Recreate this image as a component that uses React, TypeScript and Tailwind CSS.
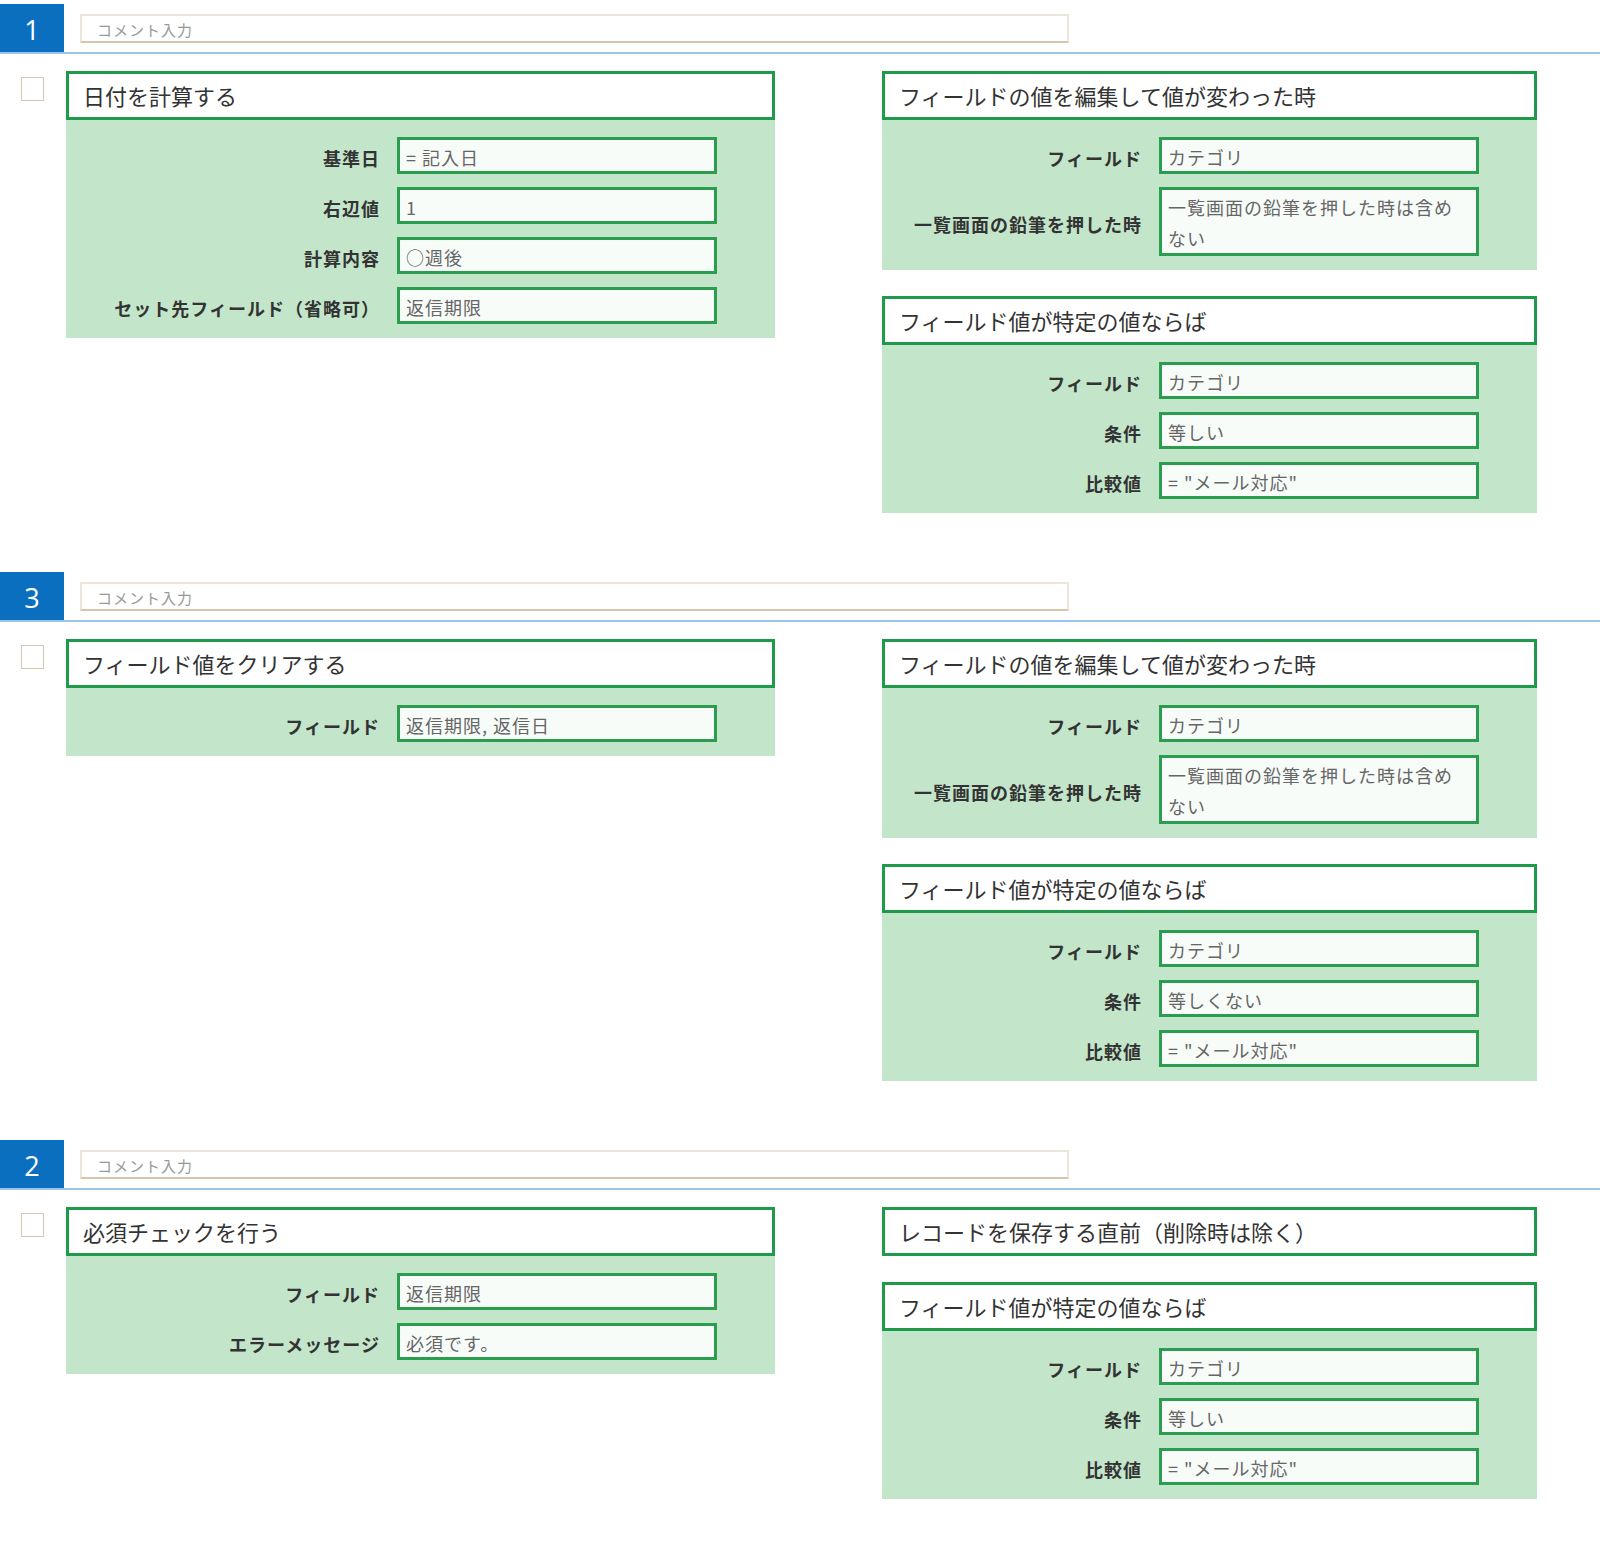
import React from 'react';

type Row = [string, string];
type Block = { title: string; rows: Row[] };
type Section = { no: string; action: Block; triggers: Block[] };

const sections: Section[] = [
  {
    no: '1',
    action: {
      title: '日付を計算する',
      rows: [
        ['基準日', '= 記入日'],
        ['右辺値', '1'],
        ['計算内容', '○週後'],
        ['セット先フィールド（省略可）', '返信期限'],
      ],
    },
    triggers: [
      {
        title: 'フィールドの値を編集して値が変わった時',
        rows: [
          ['フィールド', 'カテゴリ'],
          ['一覧画面の鉛筆を押した時', '一覧画面の鉛筆を押した時は含めない'],
        ],
      },
      {
        title: 'フィールド値が特定の値ならば',
        rows: [
          ['フィールド', 'カテゴリ'],
          ['条件', '等しい'],
          ['比較値', '= "メール対応"'],
        ],
      },
    ],
  },
  {
    no: '3',
    action: {
      title: 'フィールド値をクリアする',
      rows: [['フィールド', '返信期限, 返信日']],
    },
    triggers: [
      {
        title: 'フィールドの値を編集して値が変わった時',
        rows: [
          ['フィールド', 'カテゴリ'],
          ['一覧画面の鉛筆を押した時', '一覧画面の鉛筆を押した時は含めない'],
        ],
      },
      {
        title: 'フィールド値が特定の値ならば',
        rows: [
          ['フィールド', 'カテゴリ'],
          ['条件', '等しくない'],
          ['比較値', '= "メール対応"'],
        ],
      },
    ],
  },
  {
    no: '2',
    action: {
      title: '必須チェックを行う',
      rows: [
        ['フィールド', '返信期限'],
        ['エラーメッセージ', '必須です。'],
      ],
    },
    triggers: [
      { title: 'レコードを保存する直前（削除時は除く）', rows: [] },
      {
        title: 'フィールド値が特定の値ならば',
        rows: [
          ['フィールド', 'カテゴリ'],
          ['条件', '等しい'],
          ['比較値', '= "メール対応"'],
        ],
      },
    ],
  },
];

function Card({ block }: { block: Block }) {
  return (
    <div>
      <div className="h-[49px] border-[3px] border-[#1f9a4a] bg-white pl-[14px] flex items-center text-[22px] text-[#333]">
        {block.title}
      </div>
      {block.rows.length > 0 && (
        <div className="bg-[#c3e6cb] pt-[17px] pb-[14px] pr-[58px] flex flex-col gap-[13px]">
          {block.rows.map(([label, value]) => {
            const long = value.length > 15;
            return (
              <div key={label} className="flex items-center justify-end gap-[17px]">
                <div className="pt-[6px] text-[18px] font-bold tracking-[1px] text-[#333] whitespace-nowrap">
                  {label}
                </div>
                <div
                  className={
                    long
                      ? 'w-[320px] border-[3px] border-[#2a9d4f] bg-[#f8fcf9] pl-[6px] pr-[12px] pt-[2px] text-[18px] tracking-[1px] leading-[30.5px] text-[#666]'
                      : 'w-[320px] h-[37px] border-[3px] border-[#2a9d4f] bg-[#f8fcf9] pl-[6px] pr-[4px] pt-[3px] text-[18px] tracking-[1px] leading-[28px] text-[#666] whitespace-nowrap'
                  }
                >
                  {value}
                </div>
              </div>
            );
          })}
        </div>
      )}
    </div>
  );
}

function SectionHeader({ no }: { no: string }) {
  return (
    <div className="flex h-[50px] border-b-2 border-[#9dc3e6]">
      <div className="w-[64px] h-[48px] pt-[4px] bg-[#0b6fc0] text-white text-[27px] font-['Open_Sans',sans-serif] flex items-center justify-center">
        {no}
      </div>
      <div className="ml-[16px] mt-[10px] w-[989px] h-[29px] border-2 border-[#ece5da] border-b-[#d5c5aa] pl-[15px] pt-[3px] text-[15px] tracking-[1px] text-[#999] flex items-center">
        コメント入力
      </div>
    </div>
  );
}

export default function App() {
  return (
    <div className="min-h-screen bg-white pt-[4px] font-['Noto_Sans_CJK_JP','Noto_Sans',sans-serif]">
      <div className="flex flex-col gap-[59px]">
        {sections.map((s) => (
          <div key={s.no}>
            <SectionHeader no={s.no} />
            <div className="flex items-start mt-[17px]">
              <div className="w-[66px] shrink-0 pt-[6px] pl-[21px]">
                <div className="w-[23px] h-[24px] border border-[#d9c6ae] bg-white" />
              </div>
              <div className="w-[709px] shrink-0">
                <Card block={s.action} />
              </div>
              <div className="ml-[107px] w-[655px] shrink-0 flex flex-col gap-[26px]">
                {s.triggers.map((t, i) => (
                  <Card key={i} block={t} />
                ))}
              </div>
            </div>
          </div>
        ))}
      </div>
    </div>
  );
}
